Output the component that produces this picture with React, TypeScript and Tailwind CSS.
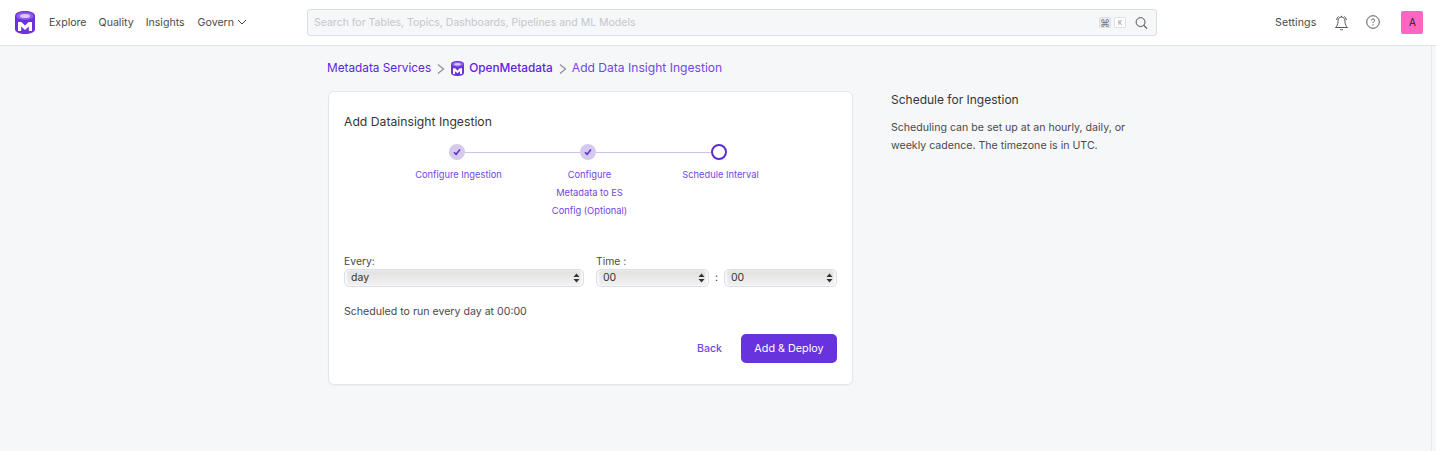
import React from "react";

function Logo({ size = 20 }: { size?: number }) {
  return (
    <svg width={size} height={size * 1.15} viewBox="0 0 20 23" fill="none">
      <path d="M0 5 C0 1.5 4.5 0 10 0 C15.5 0 20 1.5 20 5 V18 C20 21.5 15.5 23 10 23 C4.5 23 0 21.5 0 18 Z" fill="#6B32D9" />
      <ellipse cx="10" cy="5" rx="8.6" ry="3.8" fill="#8F5EEB" />
      <ellipse cx="10" cy="5" rx="5" ry="2" fill="#D9C8F7" />
      <path d="M3 20 V11 H6.4 L10 14.6 L13.6 11 H17 V20 H13.8 V15.6 L10 19 L6.2 15.6 V20 Z" fill="#FFFFFF" />
    </svg>
  );
}

function Chevron() {
  return (
    <svg width="10" height="12" viewBox="0 0 10 12" fill="none">
      <path d="M2 1.5 L7.5 6 L2 10.5" stroke="#8b8f99" strokeWidth="1.2" />
    </svg>
  );
}

function Step({ label, done, lineLeft, lineRight }: { label: string[]; done: boolean; lineLeft?: boolean; lineRight?: boolean }) {
  return (
    <div className="flex w-[131px] flex-col items-center">
      <div className="flex h-[16px] w-full items-center">
        <div className={lineLeft ? "h-px flex-1 bg-[#cfc0ee]" : "flex-1"} />
        {done ? (
          <div className="flex h-[16px] w-[16px] items-center justify-center rounded-full bg-[#d6c9ee]">
            <svg width="8" height="8" viewBox="0 0 8 8" fill="none">
              <path d="M1 4.2 L3.1 6.3 L7 1.6" stroke="#5a30c8" strokeWidth="1.5" />
            </svg>
          </div>
        ) : (
          <div className="h-[16px] w-[16px] rounded-full border-2 border-[#5a2ed0] bg-white" />
        )}
        <div className={lineRight ? "h-px flex-1 bg-[#cfc0ee]" : "flex-1"} />
      </div>
      <div className="mt-[6px] ml-[3px] text-center text-[9.3px] leading-[18px] text-[#7147e8]">
        {label.map((l) => (
          <div key={l} className="whitespace-nowrap">{l}</div>
        ))}
      </div>
    </div>
  );
}

function Sel({ value, className }: { value: string; className: string }) {
  return (
    <div className={`flex h-[18px] items-center justify-between rounded-[5px] border border-[#d8dfe9] bg-gradient-to-b from-[#e0e0e0] to-[#f2f2f2] pr-[3px] pl-[6px] text-[10.5px] text-[#37352f] shadow-[inset_2px_0_2px_rgba(255,255,255,0.8),inset_-2px_0_2px_rgba(255,255,255,0.8)] ${className}`}>
      <span>{value}</span>
      <svg width="7" height="10" viewBox="0 0 7 10" fill="#333">
        <path d="M3.5 0.5 L6.5 4 H0.5 Z M3.5 9.5 L0.5 6 H6.5 Z" />
      </svg>
    </div>
  );
}

export default function App() {
  return (
    <div className="flex min-h-[451px] flex-col bg-[#f6f7f9] font-['Inter','Liberation_Sans',sans-serif] text-[#37352f]">
      <header className="flex h-[46px] items-center border-b border-[#dde3ea] bg-white pl-[15px]">
        <Logo size={20} />
        <nav className="ml-[14px] flex items-center gap-[12px] text-[10.6px] text-[#4a4a4a]">
          <span>Explore</span>
          <span>Quality</span>
          <span>Insights</span>
          <span className="ml-[1px] flex items-center gap-[3px]">
            Govern
            <svg width="10" height="10" viewBox="0 0 10 10" fill="none">
              <path d="M1 3 L5 7 L9 3" stroke="#444" strokeWidth="1" />
            </svg>
          </span>
        </nav>
        <div className="ml-[60px] flex h-[27px] w-[850px] shrink-0 items-center rounded-[3px] border border-[#d9dde3] bg-[#f6f7f9] pr-[8px] pl-[6px]">
          <span className="flex-1 text-[10.5px] text-[#c4c7cc]">Search for Tables, Topics, Dashboards, Pipelines and ML Models</span>
          <span className="flex h-[11px] w-[12px] items-center justify-center rounded-[1px] border border-[#dde1e6] bg-[#e9ecf0] text-[10px] leading-none text-[#777]">⌘</span>
          <span className="ml-[3px] flex h-[11px] w-[12px] items-center justify-center rounded-[1px] border border-[#dde1e6] bg-white text-[6px] leading-none text-[#777]">K</span>
          <svg className="ml-[9px]" width="13" height="14" viewBox="0 0 14 14" fill="none">
            <circle cx="6" cy="6" r="4.8" stroke="#444" strokeWidth="1" />
            <path d="M9.5 9.5 L13 13" stroke="#444" strokeWidth="1.1" />
          </svg>
        </div>
        <span className="ml-[118px] text-[10.6px] tracking-[0.1px] text-[#4a4a4a]">Settings</span>
        <svg className="ml-[18px]" width="15" height="16" viewBox="0 0 15 16" fill="none" stroke="#444" strokeWidth="0.9">
          <path d="M7.5 2 C5 2 4 4 4 6.5 C4 9.5 3 11 1.5 12.5 H13.5 C12 11 11 9.5 11 6.5 C11 4 10 2 7.5 2 Z" />
          <path d="M6 14 C6.5 15.2 8.5 15.2 9 14" />
          <path d="M2.6 5 C2.8 3.4 3.5 2.2 4.6 1.4 M12.4 5 C12.2 3.4 11.5 2.2 10.4 1.4" />
          <path d="M7.5 0.8 V2" />
        </svg>
        <svg className="ml-[17px] -mt-[2px]" width="14" height="14" viewBox="0 0 14 14" fill="none">
          <circle cx="7" cy="7" r="6.3" stroke="#444" strokeWidth="0.9" />
          <path d="M5.4 5.5 C5.4 4.5 6.1 4 7 4 C7.9 4 8.6 4.6 8.6 5.4 C8.6 6.5 7 6.6 7 7.9" stroke="#444" strokeWidth="0.9" />
          <circle cx="7" cy="9.8" r="0.6" fill="#444" />
        </svg>
        <div className="ml-[21px] flex h-[23px] w-[22px] items-center justify-center rounded-[2px] bg-[#ff66c4] text-[10px] text-[#222]">A</div>
      </header>
      <div className="mr-[4px] flex flex-1 border-r border-[#e6e8ec]">
        <main className="flex pl-[328px]">
          <div className="w-[525px]">
            <div className="flex h-[45px] items-center text-[11.8px] text-[#5f22e0]">
              <span className="-ml-[1px]">Metadata Services</span>
              <span className="ml-[5px]"><Chevron /></span>
              <span className="mx-[5px] flex"><Logo size={13} /></span>
              <span className="font-medium">OpenMetadata</span>
              <span className="ml-[5px]"><Chevron /></span>
              <span className="ml-[4px] text-[12.1px] text-[#7147e8]">Add Data Insight Ingestion</span>
            </div>
            <div className="h-[294px] rounded-[6px] border border-[#e3e6ea] bg-white px-[15px] pt-[23px] shadow-[0_1px_2px_rgba(0,0,0,0.04)]">
              <h1 className="text-[12.2px] leading-[14px] text-[#37352f]">Add Datainsight Ingestion</h1>
              <div className="mt-[15px] ml-[47.5px] flex">
                <Step label={["Configure Ingestion"]} done lineRight />
                <Step label={["Configure", "Metadata to ES", "Config (Optional)"]} done lineLeft lineRight />
                <Step label={["Schedule Interval"]} done={false} lineLeft />
              </div>
              <div className="mt-[35px] flex">
                <div className="w-[252px]">
                  <div className="text-[10.4px] leading-[14px] text-[#4a4a4a]">Every:</div>
                  <Sel value="day" className="w-[240px]" />
                </div>
                <div>
                  <div className="text-[10.4px] leading-[14px] text-[#4a4a4a]">Time :</div>
                  <div className="flex items-center">
                    <Sel value="00" className="w-[113px]" />
                    <span className="mx-[6px] text-[10.5px]">:</span>
                    <Sel value="00" className="w-[113px]" />
                  </div>
                </div>
              </div>
              <p className="mt-[18px] text-[10.6px] leading-[13px] text-[#4a4a4a]">Scheduled to run every day at 00:00</p>
              <div className="mt-[16px] flex items-center justify-end">
                <span className="text-[10.6px] font-medium text-[#7147e8]">Back</span>
                <button className="ml-[19px] flex h-[29px] w-[96px] items-center justify-center rounded-[5px] bg-[#6633dd] pt-px text-[10.8px] text-white">Add &amp; Deploy</button>
              </div>
            </div>
          </div>
          <aside className="ml-[38px] w-[255px] pt-[47px]">
            <h2 className="text-[12px] leading-[14px] text-[#37352f]">Schedule for Ingestion</h2>
            <p className="mt-[12px] text-[10.6px] leading-[18px] text-[#4a4a4a]">Scheduling can be set up at an hourly, daily, or weekly cadence. The timezone is in UTC.</p>
          </aside>
        </main>
      </div>
    </div>
  );
}
